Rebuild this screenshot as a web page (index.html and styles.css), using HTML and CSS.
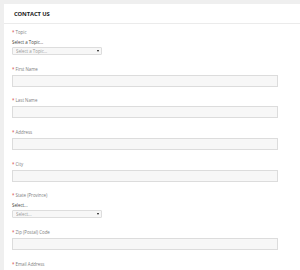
FILE: index.html
```html
<!DOCTYPE html>
<html>
<head>
<meta charset="utf-8">
<link rel="stylesheet" href="styles.css">
</head>
<body>
<div class="panel">
  <div class="head">CONTACT US</div>
  <form class="form">
    <div class="field">
      <label class="lbl"><span class="req">*</span> Topic</label>
      <div class="hint">Select a Topic...</div>
      <div class="sel"><select><option>Select a Topic...</option></select></div>
    </div>
    <div class="field">
      <label class="lbl"><span class="req">*</span> First Name</label>
      <input class="inp" type="text">
    </div>
    <div class="field">
      <label class="lbl"><span class="req">*</span> Last Name</label>
      <input class="inp" type="text">
    </div>
    <div class="field">
      <label class="lbl"><span class="req">*</span> Address</label>
      <input class="inp" type="text">
    </div>
    <div class="field">
      <label class="lbl"><span class="req">*</span> City</label>
      <input class="inp" type="text">
    </div>
    <div class="field">
      <label class="lbl"><span class="req">*</span> State (Province)</label>
      <div class="hint">Select...</div>
      <div class="sel"><select><option>Select...</option></select></div>
    </div>
    <div class="field">
      <label class="lbl"><span class="req">*</span> Zip (Postal) Code</label>
      <input class="inp" type="text">
    </div>
    <div class="field">
      <label class="lbl"><span class="req">*</span> Email Address</label>
      <input class="inp" type="text">
    </div>
  </form>
</div>
</body>
</html>
```
FILE: styles.css
```css
html, body {
  margin: 0;
  padding: 0;
  background: #efefef;
  font-family: "Open Sans", "Liberation Sans", sans-serif;
  overflow: hidden;
}
body {
  padding: 4px 0 0 4px;
}
.panel {
  background: #fff;
  min-height: 300px;
}
.head {
  height: 19px;
  line-height: 20px;
  padding-left: 10px;
  font-size: 5.8px;
  font-weight: 700;
  color: #1a1a1a;
  letter-spacing: -0.1px;
  border-bottom: 1px solid #ebebeb;
}
.form {
  padding: 5px 0 0 8px;
  width: 266px;
}
.field {
  display: flex;
  flex-direction: column;
  align-items: flex-start;
  margin-bottom: 10.7px;
}
.lbl {
  display: block;
  height: 6px;
  line-height: 6px;
  font-size: 4.4px;
  color: #7d7d7d;
  margin-bottom: 3px;
}
.req {
  color: #d23b3b;
}
.hint {
  height: 6px;
  line-height: 6px;
  font-size: 4.4px;
  color: #3c3c3c;
  margin-top: 1px;
  margin-bottom: 2px;
}
.sel {
  position: relative;
  width: 90px;
  height: 8px;
}
.sel select {
  appearance: none;
  -webkit-appearance: none;
  display: block;
  box-sizing: border-box;
  width: 90px;
  height: 8px;
  margin: 0;
  padding: 0 3px;
  border: 1px solid #ddd;
  border-radius: 1px;
  background: #f7f7f7;
  font-family: inherit;
  font-size: 4.4px;
  line-height: 6px;
  color: #999;
  outline: none;
}
.sel::after {
  content: "";
  position: absolute;
  right: 3px;
  top: 3px;
  border-left: 1.5px solid transparent;
  border-right: 1.5px solid transparent;
  border-top: 2.5px solid #111;
}
.inp {
  display: block;
  box-sizing: border-box;
  width: 266px;
  height: 12px;
  margin: 0;
  padding: 0;
  border: 1px solid #dcdcdc;
  background: #f7f7f7;
  outline: none;
}
```
